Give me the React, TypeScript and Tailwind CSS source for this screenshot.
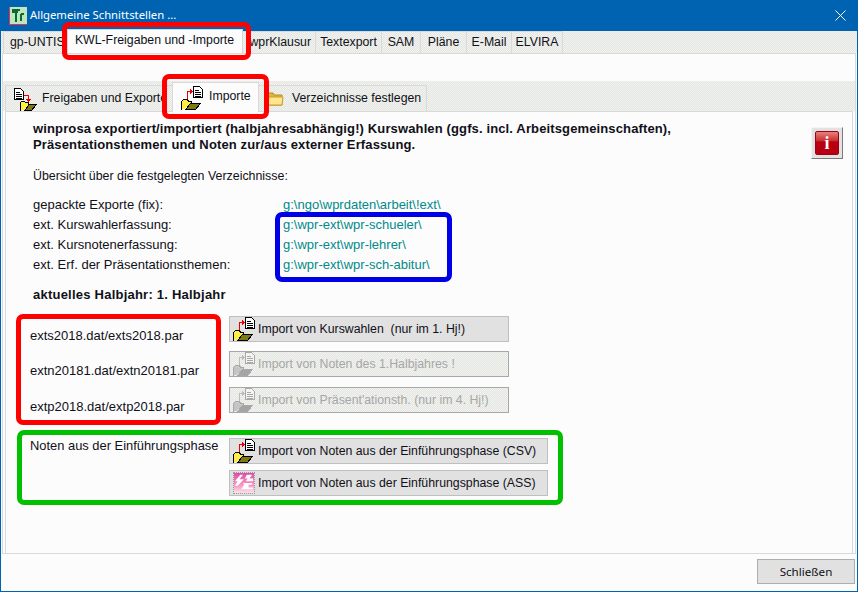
import React from 'react';

const DITHER = 'bg-[repeating-conic-gradient(#e3e5e0_0_25%,#f3f4f1_0_50%)] bg-[length:2px_2px]';

const ImportIcon: React.FC<{ disabled?: boolean }> = ({ disabled }) => {
  const dark = disabled ? '#a8a8a8' : '#000';
  const red = disabled ? '#bcbcbc' : '#f00000';
  return (
    <svg width="24" height="24" viewBox="0 0 24 24" className="shrink-0" shapeRendering="crispEdges">
      <path d="M13.5 .5h6l3 3v8h-9z" fill={disabled ? '#f4f4f4' : '#fff'} stroke={dark} />
      <path d="M15 4h4M15 6h6M15 8h6M15 10h6" stroke={dark} />
      <path d="M7.5 13V5.5H12" fill="none" stroke={red} />
      <path d="M10 3h1v1h1v1h1v1h-1v1h-1v1h-1z" fill={red} />
      <path d="M1.5 23.5v-8l2-2h4l1 2h3v3" fill={disabled ? '#c8c8c8' : '#ffee44'} stroke={dark} />
      <path d="M2 16h7v3l-5 4H2z" fill={disabled ? '#c4c4c4' : '#ffee44'} />
      <path d="M5.5 23.5l5-6h10l-5 6z" fill={disabled ? '#a4a4a4' : '#7d7a14'} stroke={dark} />
    </svg>
  );
};

const ExportIcon = () => (
  <svg width="24" height="24" viewBox="0 0 24 24" className="shrink-0" shapeRendering="crispEdges">
    <path d="M1.5 1.5h6l3 3v8h-9z" fill="#fff" stroke="#000" />
    <path d="M3 5h4M3 7h6M3 9h6M3 11h6" stroke="#000" />
    <path d="M10.5 8.5h5v5" fill="none" stroke="#f00000" />
    <path d="M13 12h5v1h-1v1h-1v1h-1v-1h-1v-1h-1z" fill="#f00000" />
    <path d="M7.5 23.5v-8l1-1h3l1 1h3v2" fill="#ffee44" stroke="#000" />
    <path d="M8 16h7v2l-4 5H8z" fill="#ffee44" />
    <path d="M11.5 23.5l5-6h7l-5 6z" fill="#7d7a14" stroke="#000" />
  </svg>
);

const FolderIcon = () => (
  <svg width="18" height="16" viewBox="0 0 18 16" className="shrink-0">
    <path d="M1 4l1-2h5l1 2h8v10H1z" fill="#e2b53c" stroke="#b58a24" />
    <path d="M1.5 14L3 6h14l-1 8z" fill="#ffe68c" stroke="#c89c30" />
  </svg>
);

const PinkIcon = () => (
  <svg width="22" height="22" viewBox="0 0 22 22" className="shrink-0 mx-px border border-dotted border-[#9a9a9a]">
    <defs>
      <linearGradient id="pinkFade" x1="0" y1="0" x2="0" y2="1">
        <stop offset="0" stopColor="#e24aa8" />
        <stop offset="0.65" stopColor="#fb9cc6" />
        <stop offset="1" stopColor="#f8e4e8" />
      </linearGradient>
    </defs>
    <rect width="22" height="22" fill="url(#pinkFade)" />
    <path d="M7 2h3L6 7h5l-7 7H1l3-5H1zM14 2h6l-3 4h4v3h-8l2-3h-3zM10 11h10v2h-4v3h5v2H8l3-5z" fill="#fff" />
  </svg>
);

const AppIcon = () => (
  <svg width="18" height="18" viewBox="0 0 18 18" className="shrink-0" shapeRendering="crispEdges">
    <rect width="18" height="18" fill="#bfe6bc" />
    <path d="M.5 0v17.5H18" fill="none" stroke="#e8305c" />
    <path d="M3 3h8M3 5h6M6 2v4M7 6v9M12 7h3M12 7v7" stroke="#0a6a30" strokeWidth="1.5" fill="none" />
  </svg>
);

const OuterTab: React.FC<{ label: string; w: string }> = ({ label, w }) => (
  <div className={`${w} h-[22px] flex items-center justify-center border-t border-r border-[#d9d9d9] text-[#101018] overflow-hidden whitespace-nowrap`}>
    {label}
  </div>
);

const PathRow: React.FC<{ label: string; path: string }> = ({ label, path }) => (
  <div className="flex items-center h-[20px]">
    <span className="w-[250px]">{label}</span>
    <span className="text-[#008a8a]">{path}</span>
  </div>
);

const ImportButton: React.FC<{ label: string; w: string; disabled?: boolean; icon?: React.ReactNode }> = ({ label, w, disabled, icon }) => (
  <div
    className={`${w} h-[26px] flex items-center gap-[2px] pl-[2px] border whitespace-pre text-[12.3px] ${
      disabled ? `${DITHER} border-[#a8a8a8] text-[#a6a6a6]` : 'bg-[#e1e1e1] border-[#bfbfbf] text-[#101018]'
    }`}
  >
    {icon ?? <ImportIcon disabled={disabled} />}
    <span>{label}</span>
  </div>
);

const FileRow: React.FC<{ file: string; label: string; disabled?: boolean; className?: string }> = ({ file, label, disabled, className }) => (
  <div className={`flex items-center h-[26px] ${className ?? ''}`}>
    <span className="w-[199px] -ml-[3px] pt-[14px] leading-[16px]">{file}</span>
    <ImportButton label={label} w="w-[280px]" disabled={disabled} />
  </div>
);

const Frame: React.FC<{ className: string }> = ({ className }) => (
  <div className={`absolute border-[5px] rounded-[7px] pointer-events-none ${className}`} />
);

export default function App() {
  return (
    <div className="relative w-[858px] h-[592px] overflow-hidden flex flex-col bg-[#fcfcfc] border-x border-b border-[#0063b1] font-['Liberation_Sans',Arial,sans-serif] text-[13px] text-[#101018]">
      {/* Titlebar */}
      <div className="h-[31px] -mx-px bg-[#0063b1] flex items-center pl-[9px] pr-[12px] text-white shrink-0">
        <AppIcon />
        <span className="ml-[3px] font-['Noto_Sans',sans-serif] text-[11.3px]">Allgemeine Schnittstellen ...</span>
        <svg width="11" height="11" viewBox="0 0 11 11" className="ml-auto" stroke="#fff" strokeWidth="1">
          <path d="M0.5 0.5l10 10M10.5 0.5l-10 10" />
        </svg>
      </div>

      {/* Outer tabs */}
      <div className={`h-[22px] pl-[2px] flex shrink-0 text-[12.3px] ${DITHER}`}>
        <div className="w-[64px] h-[22px] flex items-center pl-[6px] border-t border-l border-[#d9d9d9] overflow-hidden whitespace-nowrap">gp-UNTIS</div>
        <div className="w-[176px] h-[24px] -mt-[2px] flex items-center justify-center bg-[#fcfcfc] border-x border-t border-[#d9d9d9] z-10 pb-[2px] pr-[1px]">KWL-Freigaben und -Importe</div>
        <div className="w-[73px] h-[22px] flex items-center justify-end pr-[4px] border-t border-r border-[#d9d9d9] overflow-hidden whitespace-nowrap">wprKlausur</div>
        <OuterTab label="Textexport" w="w-[66px]" />
        <OuterTab label="SAM" w="w-[39px]" />
        <OuterTab label="Pläne" w="w-[46px]" />
        <OuterTab label="E-Mail" w="w-[45px]" />
        <OuterTab label="ELVIRA" w="w-[51px]" />
      </div>

      {/* Outer panel */}
      <div className="h-[501px] mx-px border-x border-y border-[#d9d9d9] flex flex-col shrink-0">
        <div className="h-[27px] shrink-0" />
        <div className={`h-[30px] shrink-0 flex items-end pl-[2px] text-[12.3px] ${DITHER}`}>
          <div className="w-[167px] h-[26px] flex items-center gap-[5px] pl-[7px] border-t border-l border-[#d9d9d9] overflow-hidden whitespace-nowrap">
            <ExportIcon />
            <span>Freigaben und Exporte</span>
          </div>
          <div className="w-[87px] h-[30px] -mb-px flex items-center gap-[5px] pl-[7px] bg-[#fcfcfc] border-x border-t border-[#d9d9d9] z-10">
            <ImportIcon />
            <span className="-mt-[2px]">Importe</span>
          </div>
          <div className="w-[168px] h-[26px] flex items-center gap-[8px] pl-[7px] border-t border-r border-[#d9d9d9] whitespace-nowrap">
            <FolderIcon />
            <span>Verzeichnisse festlegen</span>
          </div>
        </div>

        {/* Inner panel */}
        <div className="flex-1 mx-[2px] border-x border-t border-[#d9d9d9] pl-[27px] pt-[9px] flex flex-col">
          <div className="flex">
            <div className="font-bold leading-[16px] tracking-[0.13px]">
              <div className="whitespace-nowrap">winprosa exportiert/importiert (halbjahresabhängig!) Kurswahlen (ggfs. incl. Arbeitsgemeinschaften),</div>
              <div>Präsentationsthemen und Noten zur/aus externer Erfassung.</div>
            </div>
            <div className="ml-[140px] mt-[6px] w-[32px] h-[32px] shrink-0 bg-[#e2e2e2] border border-[#f4f4f4] border-r-[#7a7a7a] border-b-[#7a7a7a] flex items-center justify-center">
              <div className="w-[24px] h-[24px] rounded-[2px] border border-[#a00010] bg-[linear-gradient(#e8807c_0%,#c83030_40%,#b80012_45%,#b80012_100%)] flex items-center justify-center font-['Liberation_Serif',serif] font-bold text-white text-[18px] leading-none">
                i
              </div>
            </div>
          </div>

          <div className="mt-[9px] h-[16px] leading-[16px] text-[12.4px]">Übersicht über die festgelegten Verzeichnisse:</div>

          <div className="mt-[11px]">
            <PathRow label="gepackte Exporte (fix):" path="g:\ngo\wprdaten\arbeit\!ext\" />
            <PathRow label="ext. Kurswahlerfassung:" path="g:\wpr-ext\wpr-schueler\" />
            <PathRow label="ext. Kursnotenerfassung:" path="g:\wpr-ext\wpr-lehrer\" />
            <PathRow label="ext. Erf. der Präsentationsthemen:" path="g:\wpr-ext\wpr-sch-abitur\" />
          </div>

          <div className="mt-[12px] h-[16px] leading-[16px] font-bold tracking-[0.23px]">aktuelles Halbjahr: 1. Halbjahr</div>

          <div className="mt-[13px] flex flex-col gap-[9px]">
            <FileRow file="exts2018.dat/exts2018.par" label="Import von Kurswahlen  (nur im 1. Hj!)" />
            <FileRow file="extn20181.dat/extn20181.par" label="Import von Noten des 1.Halbjahres !" disabled />
            <FileRow file="extp2018.dat/extp2018.par" label="Import von Präsent'ationsth. (nur im 4. Hj!)" disabled className="mt-px" />
          </div>

          <div className="mt-[25px] flex">
            <span className="w-[199px] -ml-[3px] leading-[16px] text-[12.9px]">Noten aus der Einführungsphase</span>
            <div className="flex flex-col gap-[6px]">
              <ImportButton label="Import von Noten aus der Einführungsphase (CSV)" w="w-[319px]" />
              <ImportButton label="Import von Noten aus der Einführungsphase (ASS)" w="w-[319px]" icon={<PinkIcon />} />
            </div>
          </div>
        </div>
      </div>

      {/* Footer */}
      <div className="flex-1 flex justify-end pt-[5px] pr-[2px]">
        <div className="w-[98px] h-[25px] flex items-center justify-center bg-[#e1e1e1] border border-[#adadad] font-['Noto_Sans',sans-serif] text-[11.6px]">
          Schließen
        </div>
      </div>

      {/* Annotation frames */}
      <Frame className="left-[61px] top-[22px] w-[189px] h-[38px] border-[#ff0000]" />
      <Frame className="left-[161px] top-[74px] w-[107px] h-[45px] border-[#ff0000]" />
      <Frame className="left-[15px] top-[314px] w-[205px] h-[111px] border-[#ff0000]" />
      <Frame className="left-[274px] top-[212px] w-[177px] h-[70px] border-[#0000e6]" />
      <Frame className="left-[16px] top-[430px] w-[546px] h-[75px] border-[#00c000]" />
    </div>
  );
}
